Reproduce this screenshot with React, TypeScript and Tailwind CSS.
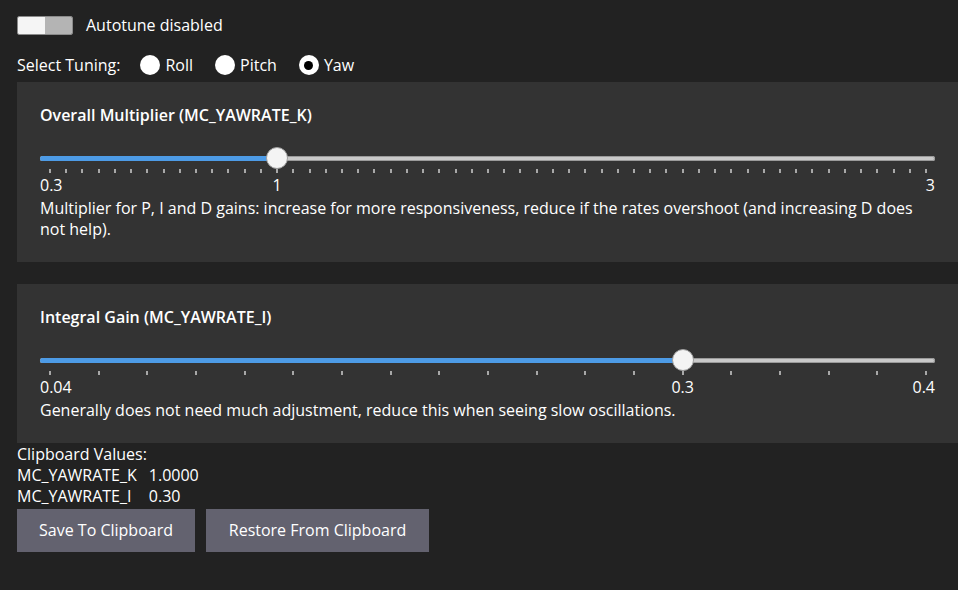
import React from "react";

type SliderProps = {
  title: string;
  min: number;
  max: number;
  step: number;
  value: number;
  minLabel: string;
  maxLabel: string;
  valueLabel: string;
  description: string;
};

const TuningSlider = ({ title, min, max, step, value, minLabel, maxLabel, valueLabel, description }: SliderProps) => {
  const count = Math.round((max - min) / step);
  const ticks = Array.from({ length: count + 1 }, (_, i) => i / count);
  const frac = (value - min) / (max - min);
  // the thumb travels inside the track, inset by its radius
  const pos = `calc(10px + (100% - 19px) * ${frac})`;

  return (
    <section className="ml-[17px] bg-[#333333] pl-[23px] pr-[23px] pt-[23px] pb-[22px]">
      <h2 className="text-[16px] font-semibold leading-[20px] text-white">{title}</h2>

      <div className="relative mt-[18px] h-[30px]">
        <div className="absolute left-0 right-0 top-[13px] h-[5px] rounded-full bg-[#c9c9c9] shadow-[inset_0_0_0_1px_#9a9a9a]" />
        <div
          className="absolute left-0 top-[13px] h-[5px] rounded-full bg-[#4d9be6]"
          style={{ width: pos }}
        />
        {ticks.map((t, i) => (
          <div
            key={i}
            className="absolute top-[26px] h-[4px] w-[2px] -translate-x-1/2 bg-[#a8a8a8]"
            style={{ left: `calc(10px + (100% - 19px) * ${t})` }}
          />
        ))}
        <div
          className="absolute top-[4px] h-[22px] w-[22px] -translate-x-1/2 rounded-full border border-[#9e9e9e] bg-[#f4f4f4]"
          style={{ left: pos }}
        />
      </div>

      <div className="relative mt-[2px] flex h-[20px] justify-between text-[16px] leading-[20px] text-white">
        <span>{minLabel}</span>
        <span className="absolute -translate-x-1/2" style={{ left: pos }}>
          {valueLabel}
        </span>
        <span>{maxLabel}</span>
      </div>

      <p className="mt-[3px] text-[16px] leading-[21px] text-white">{description}</p>
    </section>
  );
};

const Radio = ({ label, checked }: { label: string; checked?: boolean }) => (
  <label className="flex items-center gap-[5px]">
    <span className="flex h-[20px] w-[20px] items-center justify-center rounded-full bg-white">
      {checked && <span className="h-[9px] w-[9px] rounded-full bg-black" />}
    </span>
    <span>{label}</span>
  </label>
);

export default function App() {
  return (
    <div
      className="min-h-[590px] w-full bg-[#222222] pt-[15px] text-white"
      style={{ fontFamily: '"Open Sans", "Noto Sans", sans-serif' }}
    >
      <div className="flex items-center gap-[13px] pl-[17px]">
        <div className="flex h-[19px] w-[56px] overflow-hidden rounded-[2px] border border-[#8a8a8a]">
          <div className="w-1/2 bg-[#f5f5f5]" />
          <div className="w-1/2 bg-[#b4b4b4]" />
        </div>
        <span className="text-[16px] leading-[20px]">Autotune disabled</span>
      </div>

      <div className="mt-[19px] flex h-[22px] items-center pl-[17px] text-[16px] leading-[20px]">
        <span className="mr-[20px]">Select Tuning:</span>
        <div className="flex items-center gap-[22px]">
          <Radio label="Roll" />
          <Radio label="Pitch" />
          <Radio label="Yaw" checked />
        </div>
      </div>

      <div className="mt-[6px] flex flex-col gap-[22px]">
        <TuningSlider
          title="Overall Multiplier (MC_YAWRATE_K)"
          min={0.3}
          max={3}
          step={0.05}
          value={1}
          minLabel="0.3"
          maxLabel="3"
          valueLabel="1"
          description="Multiplier for P, I and D gains: increase for more responsiveness, reduce if the rates overshoot (and increasing D does not help)."
        />
        <TuningSlider
          title="Integral Gain (MC_YAWRATE_I)"
          min={0.04}
          max={0.4}
          step={0.02}
          value={0.3}
          minLabel="0.04"
          maxLabel="0.4"
          valueLabel="0.3"
          description="Generally does not need much adjustment, reduce this when seeing slow oscillations."
        />
      </div>

      <div className="mt-[1px] pl-[17px] text-[16px] leading-[21px]">
        <div>Clipboard Values:</div>
        <div className="grid grid-cols-[max-content_max-content] gap-x-[12px]">
          <span>MC_YAWRATE_K</span>
          <span>1.0000</span>
          <span>MC_YAWRATE_I</span>
          <span>0.30</span>
        </div>
        <div className="mt-[2px] flex gap-[11px]">
          <button className="h-[43px] w-[178px] bg-[#63626f] text-[16px] text-white">Save To Clipboard</button>
          <button className="h-[43px] w-[223px] bg-[#63626f] text-[16px] text-white">Restore From Clipboard</button>
        </div>
      </div>
    </div>
  );
}
